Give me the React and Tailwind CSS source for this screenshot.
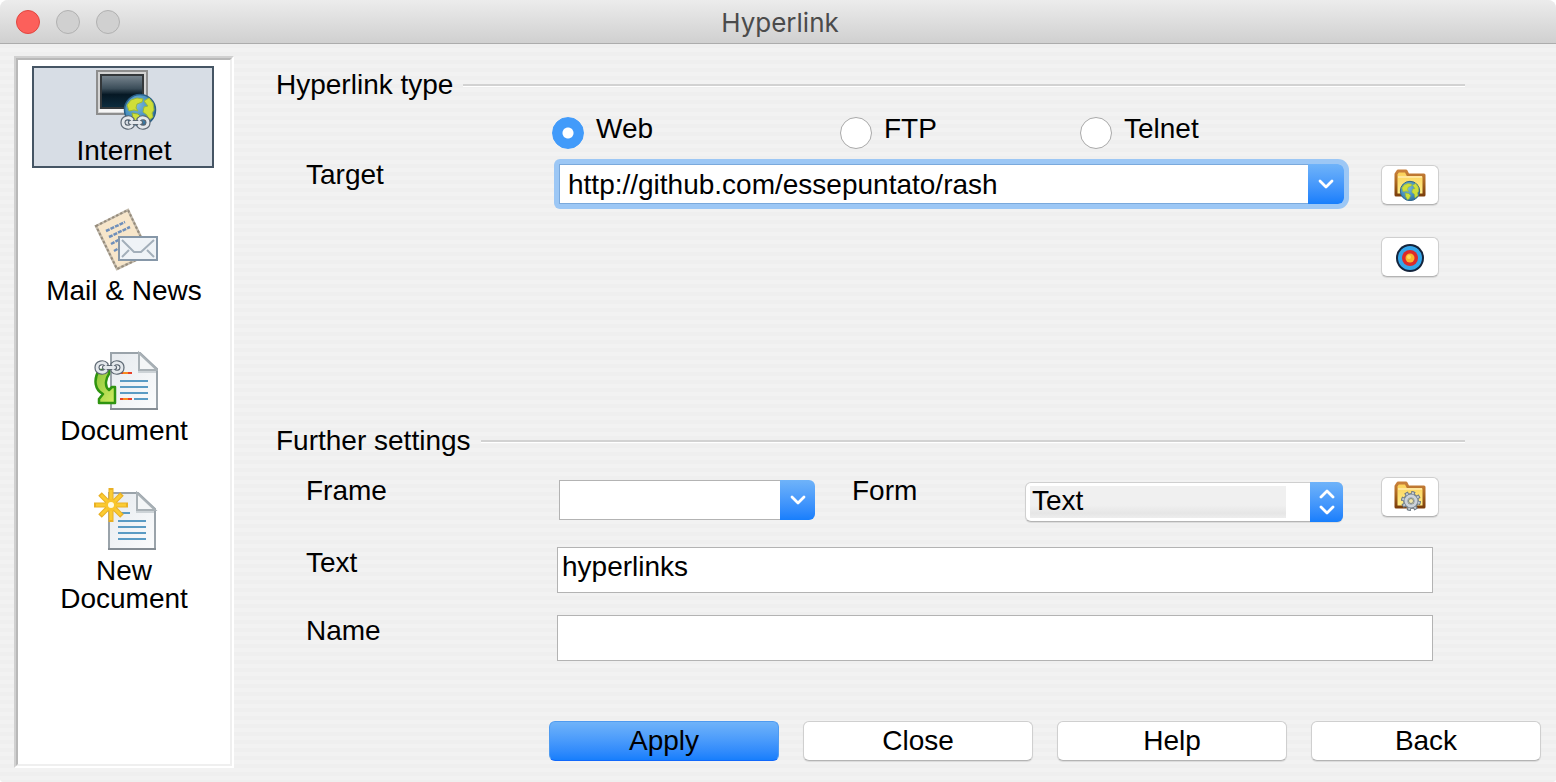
import React from 'react';

const Globe = ({ cx, cy, r }) => (
  <g transform={`translate(${cx} ${cy}) scale(${r / 16})`}>
    <circle r="15.5" fill="url(#sea)" stroke="#2a5f86" strokeWidth="1.5" />
    <path d="M-13 -5 L-9 -10 L-3 -12 L3 -11 L2 -8 L-3 -6 L-4 -2 L-2 1 L-6 0 L-11 1 Z" fill="#d0de38" stroke="#9ab83c" strokeWidth="1" />
    <path d="M-8 3 L-2 4 L1 7 L-1 12 L-4 14 L-7 9 Z" fill="#cfe03a" stroke="#8fae3a" strokeWidth="1" />
    <path d="M4 -9 L9 -12 L13 -7 L14 0 L12 3 L13 7 L8 11 L7 5 L3 2 L4 -3 L8 -4 Z" fill="#d0de38" stroke="#9ab83c" strokeWidth="1" />
  </g>
);

const Links = () => (
  <>
    <path d="M12 4.500 C9.500 1.500 3 2.500 3 7.500 S9.500 13.500 12 10.500" />
    <path d="M19 4.500 C21.500 1.500 28 2.500 28 7.500 S21.500 13.500 19 10.500" />
    <path d="M10.500 7.500 H20.500" />
  </>
);

const Chain = ({ x, y }) => (
  <g transform={`translate(${x} ${y})`} fill="none" strokeLinecap="round">
    <g stroke="#5d6873" strokeWidth="5.200"><Links /></g>
    <g stroke="#e4e8ec" strokeWidth="2.800"><Links /></g>
  </g>
);

const Page = ({ x, y }) => (
  <g transform={`translate(${x} ${y})`}>
    <path d="M1 1 H30 L47 17 V57 H1 Z" fill="url(#paper)" stroke="#9aa3aa" strokeWidth="2" />
    <path d="M0 57 H48" stroke="#858d94" strokeWidth="2" />
    <path d="M29 1 L47 18 H29 Z" fill="#f4f6f7" stroke="#a9b1b6" strokeWidth="2" />
    <path d="M28 20 H46" stroke="#cdd3d7" strokeWidth="2" />
  </g>
);

const Defs = () => (
  <svg className="absolute size-0" aria-hidden="true">
    <defs>
      <radialGradient id="sea" cx=".4" cy=".35" r=".7">
        <stop offset="0" stopColor="#7db8dd" />
        <stop offset=".6" stopColor="#4790bf" />
        <stop offset="1" stopColor="#2f6c96" />
      </radialGradient>
      <linearGradient id="screen" x1="0" y1="0" x2="0" y2="1">
        <stop offset="0" stopColor="#76838d" />
        <stop offset=".4" stopColor="#3c4e5a" />
        <stop offset=".6" stopColor="#061824" />
        <stop offset="1" stopColor="#0d2c3e" />
      </linearGradient>
      <linearGradient id="paper" x1="0" y1="0" x2="1" y2="1">
        <stop offset="0" stopColor="#e6eaee" />
        <stop offset="1" stopColor="#fbfcfd" />
      </linearGradient>
      <linearGradient id="folder" x1="0" y1="0" x2="0" y2="1">
        <stop offset="0" stopColor="#fbcf57" />
        <stop offset="1" stopColor="#fff08c" />
      </linearGradient>
      <linearGradient id="leather" x1="0" y1="0" x2="0" y2="1">
        <stop offset="0" stopColor="#c9803a" />
        <stop offset=".5" stopColor="#a8651f" />
        <stop offset="1" stopColor="#7d3f0c" />
      </linearGradient>
      <linearGradient id="leaf" x1="0" y1="0" x2="1" y2="1">
        <stop offset="0" stopColor="#8cc63a" />
        <stop offset="1" stopColor="#d2ec62" />
      </linearGradient>
    </defs>
  </svg>
);

const InternetIcon = () => (
  <svg viewBox="0 0 64 64" className="size-16" aria-hidden="true">
    <rect x="3" y="3" width="50" height="43" fill="#d4d4d4" stroke="#8e8e8e" strokeWidth="2" />
    <rect x="6" y="6" width="44" height="35" fill="#34383b" />
    <rect x="8" y="8" width="40" height="31" fill="url(#screen)" />
    <rect x="5" y="41" width="46" height="3" fill="#f6f6f6" />
    <Globe cx={46} cy={42} r={16} />
    <Chain x={26} y={47} />
  </svg>
);

const MailIcon = () => (
  <svg viewBox="0 0 64 64" className="size-16" aria-hidden="true">
    <path d="M2 18 L34 2 L55 46 L23 61 Z" fill="#f7e6ca" stroke="#c4bcae" strokeWidth="2.500" />
    <path d="M2 18 L34 2 L55 46 L23 61 Z" fill="none" stroke="#968c7c" strokeWidth="2" strokeDasharray="2.500 2" />
    <g stroke="#6f8fba" strokeWidth="2.500" strokeDasharray="4 1">
      <path d="M12 23 L31 14" />
      <path d="M15 29 L36 19" />
      <path d="M17 36 L30 29" />
      <path d="M20 43 L27 39" />
    </g>
    <rect x="25" y="29" width="38" height="23" fill="#eff3f7" stroke="#8697a8" strokeWidth="2" />
    <path d="M28 32 L40 44 H47 L60 32 M28 49 L35 42 M60 49 L53 42" fill="none" stroke="#a3afba" strokeWidth="2" />
  </svg>
);

const DocumentIcon = () => (
  <svg viewBox="0 -2 64 64" className="size-16" aria-hidden="true">
    <Page x={16} y={2} />
    <path d="M26 23 H38 M26 49 H38" stroke="#e8402a" strokeWidth="2" />
    <path d="M29 23 H34 M29 49 H34" stroke="#f98a1e" strokeWidth="2" />
    <path d="M26 31 H54 M26 37 H54 M26 43 H54 M40 49 H54" stroke="#5a9bc4" strokeWidth="2" />
    <path d="M5 20 C-1 30 1 40 9 44 L5 49 V53 H21 V37 H18 L15 40 C10 36 12 28 15 24 V20 Z" fill="url(#leaf)" stroke="#2f9410" strokeWidth="2.500" strokeLinejoin="round" />
    <Chain x={0} y={10} />
  </svg>
);

const NewDocumentIcon = () => (
  <svg viewBox="0 0 64 64" className="size-16" aria-hidden="true">
    <Page x={14} y={4} />
    <path d="M26 25 H36 M24 33 H52 M24 39 H52 M24 45 H52 M24 51 H52" stroke="#5a9bc4" strokeWidth="2" />
    <path d="M17 0 V34 M0 17 H34 M6 6 L28 28 M28 6 L6 28" stroke="#e9b024" strokeWidth="5" />
    <path d="M17 2 V32 M2 17 H32 M7 7 L27 27 M27 7 L7 27" stroke="#fbcb32" strokeWidth="3" />
    <circle cx="17" cy="17" r="6" fill="#f9c52c" />
    <circle cx="17" cy="17" r="3" fill="#fffbe0" />
  </svg>
);

const Folder = () => (
  <>
    <path d="M2 26 V5 L4 2 H12 L14 6 H30 V26 Z" fill="url(#folder)" stroke="url(#leather)" strokeWidth="3" strokeLinejoin="round" />
    <path d="M4 8 H28" stroke="#ffe69a" strokeWidth="2" />
  </>
);

const WebFolderIcon = () => (
  <svg viewBox="0 0 32 32" className="size-8" aria-hidden="true">
    <Folder />
    <Globe cx={16} cy={22} r={10} />
  </svg>
);

const TargetIcon = () => (
  <svg viewBox="0 0 32 32" className="size-8" aria-hidden="true">
    <circle cx="16" cy="17" r="14" fill="#14243c" />
    <circle cx="16" cy="17" r="12" fill="#35a6ea" />
    <circle cx="16" cy="17" r="8" fill="#dd2a2a" />
    <circle cx="16" cy="17" r="4.500" fill="#fbb62c" />
    <circle cx="15" cy="16" r="2" fill="#ffd860" />
  </svg>
);

const GearFolderIcon = () => (
  <svg viewBox="0 0 32 32" className="size-8" aria-hidden="true">
    <Folder />
    <g fill="none">
      <circle cx="17" cy="20" r="8" stroke="#6a7681" strokeWidth="4" strokeDasharray="3.600 2.680" />
      <circle cx="17" cy="20" r="5.500" stroke="#77838e" strokeWidth="5" />
      <circle cx="17" cy="20" r="5" stroke="#ccd3d9" strokeWidth="3" />
      <circle cx="17" cy="20" r="8" stroke="#c3cbd2" strokeWidth="2" strokeDasharray="2 4.280" strokeDashoffset="-.8" />
    </g>
    <circle cx="17" cy="20" r="2.500" fill="#f3e7a8" stroke="#77838e" />
  </svg>
);

const ChevronDown = () => (
  <svg viewBox="0 0 16 10" className="h-[10px] w-4" fill="none" stroke="white" strokeWidth="2.800" strokeLinecap="round" strokeLinejoin="round" aria-hidden="true">
    <path d="M2 2 L8 8 L14 2" />
  </svg>
);

const UpDown = () => (
  <svg viewBox="0 0 16 26" className="h-[26px] w-4" fill="none" stroke="white" strokeWidth="2.800" strokeLinecap="round" strokeLinejoin="round" aria-hidden="true">
    <path d="M2 8 L8 2 L14 8 M2 18 L8 24 L14 18" />
  </svg>
);

const categories = [
  { name: 'Internet', Icon: InternetIcon },
  { name: 'Mail & News', Icon: MailIcon },
  { name: 'Document', Icon: DocumentIcon },
  { name: 'New Document', Icon: NewDocumentIcon },
];

const blue = 'bg-linear-to-b from-[#6fb3f9] to-[#167efc]';
const raised = 'rounded-md border border-[#cfcfcf] border-b-[#b4b4b4] bg-white shadow-[0_1px_1px_rgba(0,0,0,0.1)]';

const SectionTitle = ({ children }) => (
  <div className="mr-[76px] flex items-center gap-[10px]">
    <h2 className="leading-7">{children}</h2>
    <div className="h-[3px] flex-1 border-t-2 border-b border-t-[#d2d2d2] border-b-white" />
  </div>
);

const IconButton = ({ label, children }) => (
  <button aria-label={label} className={`flex h-10 w-[58px] shrink-0 items-center justify-center ${raised}`}>
    {children}
  </button>
);

const Radio = ({ label, checked, width }) => (
  <label className={`flex items-start gap-3 leading-6 ${width}`}>
    <input
      type="radio"
      name="type"
      defaultChecked={checked}
      className="size-8 shrink-0 appearance-none rounded-full border border-[#a9a9a9] bg-white checked:border-[#429bfa] checked:bg-[radial-gradient(circle,white_5px,#429bfa_6px)]"
    />
    {label}
  </label>
);

const TextRow = ({ id, label, value }) => (
  <div className="mr-[108px] flex items-start pl-[30px]">
    <label htmlFor={id} className="w-[251px] shrink-0 pt-1 leading-6">{label}</label>
    <input id={id} defaultValue={value} className="h-[46px] min-w-0 flex-1 border border-[#b3b3b3] bg-white px-1 pb-[6px] outline-none" />
  </div>
);

export default function App() {
  return (
    <div className="flex min-h-screen flex-col overflow-hidden rounded-t-lg rounded-b-sm bg-[#f1f1f1] font-['Liberation_Sans',Arial,sans-serif] text-[28px] text-black">
      <Defs />
      <header className="grid h-11 grid-cols-[1fr_auto_1fr] items-center border-b border-[#acacac] bg-linear-to-b from-[#ececec] to-[#d0d0d0] px-4">
        <div className="flex gap-4">
          <button aria-label="Close window" className="size-6 rounded-full border border-[#e2463f] bg-[#fc605b]" />
          <button aria-label="Minimize window" className="size-6 rounded-full border border-[#b1b1b1] bg-[#d0d0d0]" />
          <button aria-label="Zoom window" className="size-6 rounded-full border border-[#b1b1b1] bg-[#d0d0d0]" />
        </div>
        <h1 className="pt-[2px] pl-1 font-['Inter',sans-serif] text-[26px] text-[#4b4b4b]">Hyperlink</h1>
      </header>
      <div className="flex flex-1 bg-[repeating-linear-gradient(to_bottom,#efefef_0px,#efefef_4px,#f2f2f2_4px,#f2f2f2_8px)]">
        <div className="mt-3 mb-[14px] ml-[14px] flex w-[220px] shrink-0 border-2 border-t-[#d0d0d0] border-r-white border-b-white border-l-[#d0d0d0]">
          <nav className="flex flex-1 flex-col items-start gap-[38px] border-2 border-t-[#b8b8b8] border-r-[#efefef] border-b-[#efefef] border-l-[#b8b8b8] bg-white pt-[6px] pl-[14px]">
            {categories.map(({ name, Icon }, i) => (
              <button
                key={name}
                className={`flex min-h-[102px] w-[182px] flex-col items-center gap-[5px] border-2 pl-[2px] leading-7 ${i === 0 ? 'border-[#455564] bg-[#d7dde5]' : 'border-transparent'}`}
              >
                <span className="pl-1"><Icon /></span>
                <span>{name}</span>
              </button>
            ))}
          </nav>
        </div>
        <main className="flex min-w-0 flex-1 flex-col pt-[27px] pr-[15px] pb-[21px] pl-[42px]">
          <SectionTitle>Hyperlink type</SectionTitle>
          <div role="radiogroup" aria-label="Hyperlink type" className="mt-[18px] flex pl-[276px]">
            <Radio label="Web" checked width="w-[288px]" />
            <Radio label="FTP" width="w-[240px]" />
            <Radio label="Telnet" width="" />
          </div>
          <div className="mt-[15px] mr-[102px] flex items-start pl-[30px]">
            <label htmlFor="target" className="w-[253px] shrink-0 leading-[22px]">Target</label>
            <div className="mr-[37px] flex h-10 min-w-0 flex-1 rounded-l-xs rounded-r-md ring-[5px] ring-[#9cc7f5]">
              <input id="target" defaultValue="http://github.com/essepuntato/rash" className="min-w-0 flex-1 border border-r-0 border-[#7aa9dc] bg-white px-2 pt-[2px] outline-none" />
              <button aria-label="Show targets" className={`flex w-9 items-center justify-center rounded-r-md ${blue}`}>
                <ChevronDown />
              </button>
            </div>
            <div className="flex flex-col gap-8 pt-px">
              <IconButton label="WWW browser"><WebFolderIcon /></IconButton>
              <IconButton label="Target in document"><TargetIcon /></IconButton>
            </div>
          </div>
          <div className="mt-[150px]"><SectionTitle>Further settings</SectionTitle></div>
          <div className="mt-[22px] mr-[102px] flex items-start pl-[30px]">
            <label htmlFor="frame" className="w-[253px] shrink-0 leading-7">Frame</label>
            <div className="mt-[3px] flex h-10 w-64 shrink-0">
              <input id="frame" className="min-w-0 flex-1 border border-r-0 border-[#b3b3b3] bg-white px-1 outline-none" />
              <button aria-label="Show frames" className={`flex w-[35px] items-center justify-center rounded-r-md ${blue}`}>
                <ChevronDown />
              </button>
            </div>
            <label htmlFor="form" className="w-[172px] shrink-0 pl-[37px] leading-7">Form</label>
            <div className="mt-[5px] mr-[38px] ml-[38px] grid h-10 min-w-0 flex-1 grid-cols-[1fr_33px]">
              <select id="form" className={`col-span-2 col-start-1 row-start-1 h-10 appearance-none bg-[linear-gradient(to_bottom,#f0f0f0_60%,#e6e6e6_85%,#ededed)] bg-[length:256px_32px] bg-[position:4px_3px] bg-no-repeat px-[6px] pb-[2px] leading-[30px] outline-none ${raised}`}>
                <option>Text</option>
                <option>Button</option>
              </select>
              <span className={`pointer-events-none col-start-2 row-start-1 flex items-center justify-center rounded-r-md ${blue}`}>
                <UpDown />
              </span>
            </div>
            <IconButton label="Events"><GearFolderIcon /></IconButton>
          </div>
          <div className="mt-[25px] flex flex-col gap-[22px]">
            <TextRow id="text" label="Text" value="hyperlinks" />
            <TextRow id="name" label="Name" value="" />
          </div>
          <div className="mt-auto flex justify-end gap-6 pt-[60px]">
            <button className={`h-10 w-[230px] rounded-md border border-[#4f9bf0] border-b-[#1068fb] leading-8 ${blue}`}>Apply</button>
            <button className={`h-10 w-[230px] leading-8 ${raised}`}>Close</button>
            <button className={`h-10 w-[230px] leading-8 ${raised}`}>Help</button>
            <button className={`h-10 w-[230px] leading-8 ${raised}`}>Back</button>
          </div>
        </main>
      </div>
    </div>
  );
}
